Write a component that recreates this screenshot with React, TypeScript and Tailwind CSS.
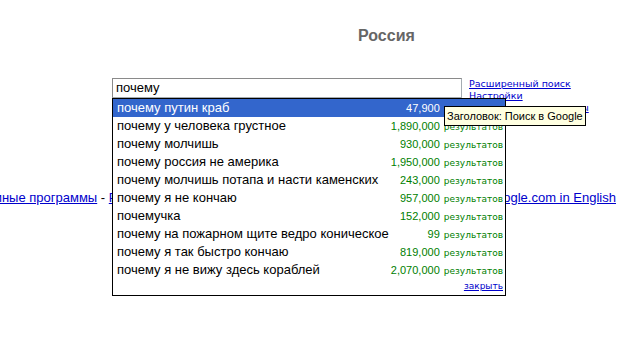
import React from "react";

const rows: [string, string][] = [
  ["почему путин краб", "47,900"],
  ["почему у человека грустное", "1,890,000"],
  ["почему молчишь", "930,000"],
  ["почему россия не америка", "1,950,000"],
  ["почему молчишь потапа и насти каменских", "243,000"],
  ["почему я не кончаю", "957,000"],
  ["почемучка", "152,000"],
  ["почему на пожарном щите ведро коническое", "99"],
  ["почему я так быстро кончаю", "819,000"],
  ["почему я не вижу здесь кораблей", "2,070,000"],
];

export default function App() {
  return (
    <div className="relative w-[625px] h-[339px] overflow-hidden bg-white font-['Liberation_Sans',Arial,sans-serif]">
      <div className="pt-[27px] pl-[358px] text-[16px] leading-[18px] font-bold text-[#666666]">Россия</div>

      <div className="mt-[33px] flex pl-[112px]">
        <div className="w-[350px] h-[20px] border border-[#a5acb2] border-t-[#8a8a8a] border-l-[#8a8a8a] pl-[3px] text-[13px] leading-[18px] text-black">
          почему
        </div>
        <div className="ml-[7px] flex flex-col font-['DejaVu_Sans',sans-serif] text-[9.5px] leading-[12px] text-[#0000cc]">
          <a className="underline">Расширенный поиск</a>
          <a className="underline">Настройки</a>
          <a className="underline">Языковые инструменты</a>
        </div>
      </div>

      <div className="mt-[76px] flex justify-between whitespace-nowrap text-[13px] leading-[16px] text-black">
        <div className="ml-[-43px]">
          <a className="underline text-[#0000cc]">Рекламные программы</a> -{" "}
          <a className="underline text-[#0000cc]">Решения для бизнеса</a> -{" "}
          <a className="underline text-[#0000cc]">Всё о Google</a>
        </div>
        <div className="mr-[9px]">
          <a className="underline text-[#0000cc]">Google.com in English</a>
        </div>
      </div>

      <div className="absolute left-[112px] top-[98px] w-[394px] border border-black bg-white">
        {rows.map(([q, n], i) => (
          <div
            key={i}
            className={
              "h-[18px] flex items-center justify-between pl-[4px] pr-[2px] " +
              (i === 0 ? "bg-[#3366cc] text-white" : "text-black")
            }
          >
            <span className="text-[13px] leading-[18px]">{q}</span>
            <span className={"flex items-baseline " + (i === 0 ? "text-white" : "text-[#008000]")}>
              <span className="text-[11px]">{n}</span>
              <span className="ml-[4px] font-['DejaVu_Sans',sans-serif] text-[9px]">результатов</span>
            </span>
          </div>
        ))}
        <div className="h-[16px] flex items-center justify-end pr-[2px]">
          <a className="underline text-[#0000cc] font-['DejaVu_Sans',sans-serif] text-[9px]">закрыть</a>
        </div>
      </div>

      <div className="absolute left-[444px] top-[106px] h-[20px] px-[2px] border border-black bg-[#ffffe1] text-[11px] leading-[18px] text-black whitespace-nowrap">
        Заголовок: Поиск в Google
      </div>
    </div>
  );
}
